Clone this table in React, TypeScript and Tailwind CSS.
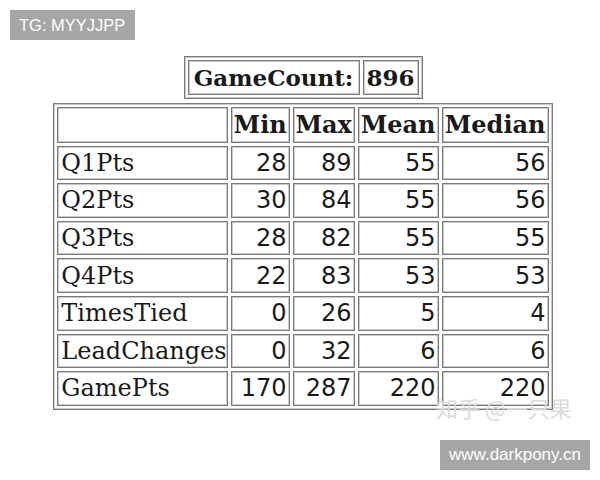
import React from 'react';

type Row = { label: string; values: number[] };

const rows: Row[] = [
  { label: 'Q1Pts', values: [28, 89, 55, 56] },
  { label: 'Q2Pts', values: [30, 84, 55, 56] },
  { label: 'Q3Pts', values: [28, 82, 55, 55] },
  { label: 'Q4Pts', values: [22, 83, 53, 53] },
  { label: 'TimesTied', values: [0, 26, 5, 4] },
  { label: 'LeadChanges', values: [0, 32, 6, 6] },
  { label: 'GamePts', values: [170, 287, 220, 220] },
];

const headers = ['Min', 'Max', 'Mean', 'Median'];
const colWidths = ['w-[59px]', 'w-[62px]', 'w-[81px]', 'w-[107px]'];

const cell = 'border border-[#7a7a7a] shadow-[inset_0_0_0_1px_#c8c8c8] h-[34.6px] p-0';

export default function App() {
  return (
    <div className="relative w-[600px] h-[480px] bg-white overflow-hidden text-[#1a1a1a] font-['DejaVu_Serif',serif]">
      {/* watermark label, top-left */}
      <div className="absolute left-[10px] top-[10px] w-[125px] h-[30px] bg-[#a6a6a6] text-white text-[16.5px] font-['Liberation_Sans',sans-serif] flex items-center pl-[9px]">
        TG: MYYJJPP
      </div>

      <div className="flex flex-col items-center pt-[56px] pl-[6px]">
        <table className="border-separate border-spacing-[3px] border border-[#7a7a7a] shadow-[inset_0_0_0_1px_#c8c8c8]">
          <tbody>
            <tr>
              <td className={`${cell} w-[172px] text-center font-bold text-[23px] leading-none`}>GameCount:</td>
              <td className={`${cell} w-[56px] text-center font-bold text-[23px] leading-none`}>896</td>
            </tr>
          </tbody>
        </table>

        <table className="mt-[4px] border-separate border-spacing-[3px] border border-[#7a7a7a] shadow-[inset_0_0_0_1px_#c8c8c8] text-[24px] leading-none">
          <thead>
            <tr>
              <th className={`${cell} w-[170px] h-[36px]`}></th>
              {headers.map((h, i) => (
                <th key={h} className={`${cell} ${colWidths[i]} h-[36px] text-center font-bold`}>
                  {h}
                </th>
              ))}
            </tr>
          </thead>
          <tbody>
            {rows.map((r) => (
              <tr key={r.label}>
                <td className={`${cell} text-left pl-[3px]`}>{r.label}</td>
                {r.values.map((v, i) => (
                  <td key={i} className={`${cell} text-right pr-[2px] font-['DejaVu_Sans',sans-serif]`}>
                    {v}
                  </td>
                ))}
              </tr>
            ))}
          </tbody>
        </table>
      </div>

      {/* faint site watermark over the table corner */}
      <div className="absolute left-[436px] top-[396px] text-[22px] text-[#dadada] font-['Noto_Sans_CJK_SC',sans-serif] leading-none">
        知乎 @一只果
      </div>

      {/* watermark label, bottom-right */}
      <div className="absolute left-[440px] top-[440px] w-[150px] h-[30px] bg-[#a6a6a6] text-white text-[17px] font-['Liberation_Sans',sans-serif] flex items-center justify-center">
        www.darkpony.cn
      </div>
    </div>
  );
}
